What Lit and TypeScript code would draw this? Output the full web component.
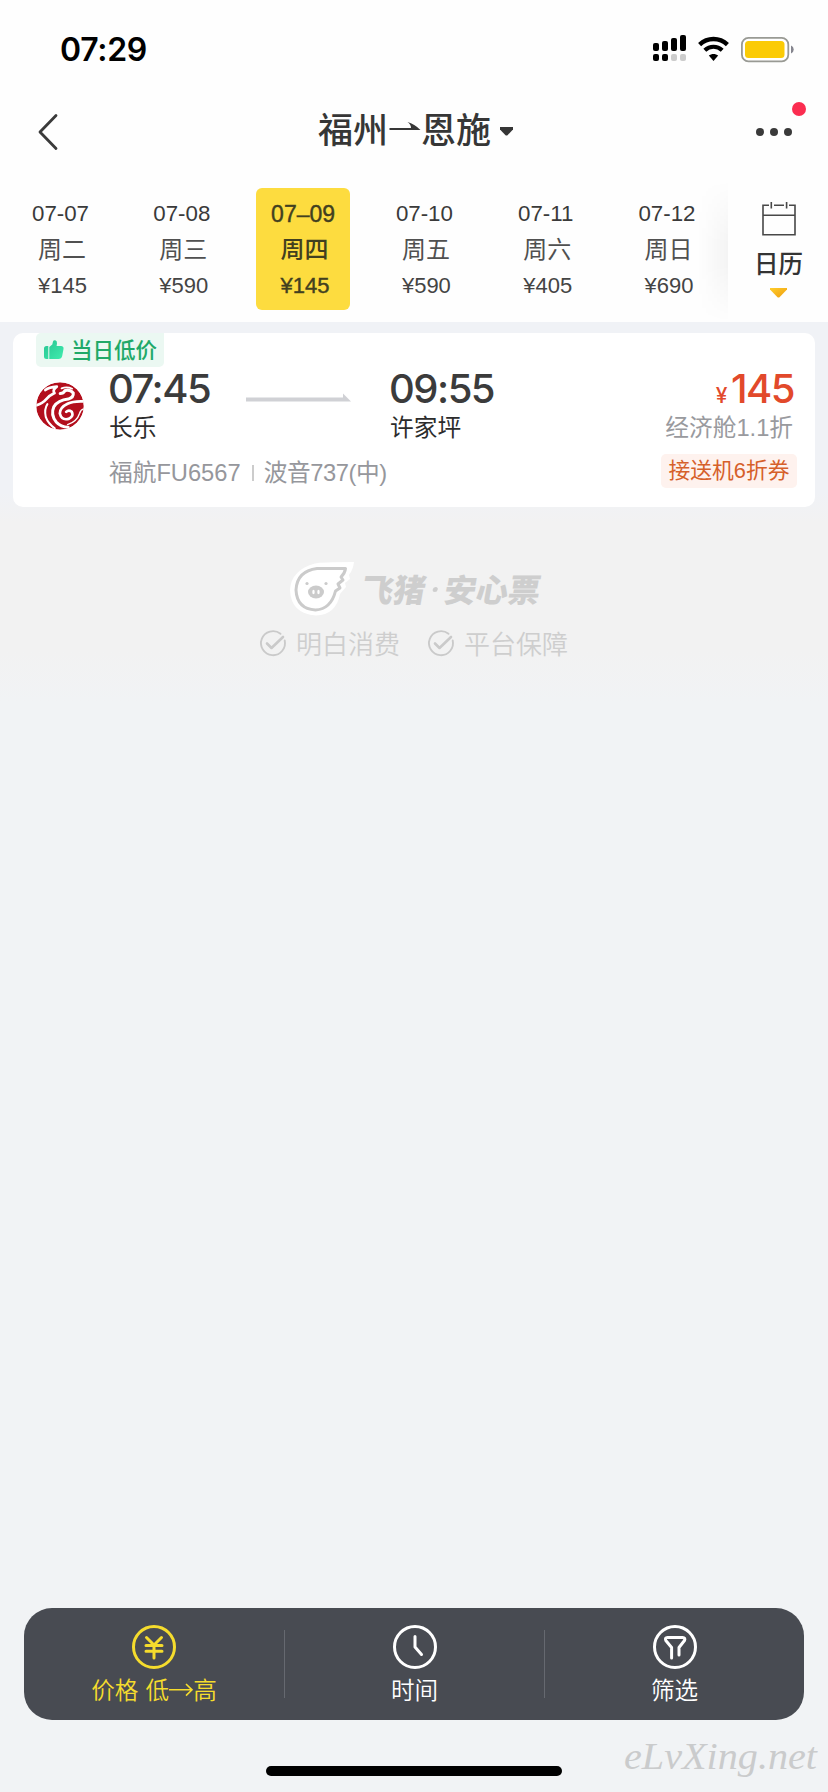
import { LitElement, html, css, svg } from "lit";
import { customElement } from "lit/decorators.js";
import { classMap } from "lit/directives/class-map.js";

const shared = css`
  :host { display: block; box-sizing: border-box; }
  * { box-sizing: border-box; }
  svg { display: block; overflow: visible; }
`;

@customElement("status-bar")
class StatusBar extends LitElement {
  static styles = [shared, css`
    :host { height: 90px; padding: 29px 34px 0 60px; display: flex; justify-content: space-between; }
    .clock { font: 600 32px/42px Inter, sans-serif; color: #000; letter-spacing: -0.3px; }
    .icons { display: flex; gap: 12px; padding-top: 6px; }
  `];
  render() {
    return html`
      <span class="clock">07:29</span>
      <div class="icons">
        <svg width="33" height="28" viewBox="0 0 33 28">
          <rect x="0" y="8" width="6" height="8" rx="2" />
          <rect x="9" y="6" width="6" height="10" rx="2" />
          <rect x="18" y="3" width="6" height="13" rx="2" />
          <rect x="27" y="0" width="6" height="16" rx="2" />
          <rect x="0" y="19" width="6" height="7" rx="2" />
          <rect x="9" y="19" width="6" height="7" rx="2" />
          <rect x="18" y="19" width="6" height="7" rx="2" fill="#ccc" />
          <rect x="27" y="19" width="6" height="7" rx="2" fill="#ccc" />
        </svg>
        <svg width="31" height="28" viewBox="0 0 31 28">
          <path d="M1.6 9.6C9.4 2.2 21.6 2.2 29.4 9.6" fill="none" stroke="#000" stroke-width="4.4" />
          <path d="M6.8 15.2C11.8 10.6 19.2 10.6 24.2 15.2" fill="none" stroke="#000" stroke-width="4.2" />
          <path d="M10.8 20.6C13.5 18.3 17.5 18.3 20.2 20.6L15.5 26Z" />
        </svg>
        <svg width="53" height="28" viewBox="0 0 53 28">
          <rect x="0.9" y="2.9" width="46.4" height="23.4" rx="6.5" fill="#fff" stroke="#999a94" stroke-width="1.8" />
          <rect x="4" y="6" width="39.5" height="17" rx="3.5" fill="#fbcb05" />
          <path d="M50 10.5Q52.7 11.6 52.7 14.6T50 18.6Z" fill="#85858e" />
        </svg>
      </div>`;
  }
}

@customElement("nav-header")
class NavHeader extends LitElement {
  static styles = [shared, css`
    :host { height: 90px; padding: 0 22px 0 38px; display: grid; grid-template-columns: 100px 1fr 100px; }
    .back { padding-top: 24px; }
    .title { display: flex; justify-content: center; align-items: flex-start; padding: 11.5px 13px 0 0; color: #363636;
      font: 500 35px/52px "Noto Sans CJK SC", sans-serif; }
    .arrow { margin: 20.5px 0 0 1px; }
    .caret { margin: 25.5px 0 0 9px; }
    .more { display: flex; flex-direction: column; align-items: flex-end; padding-top: 12px; }
    .dots { margin: 11px 14px 0 0; }
  `];
  render() {
    return html`
      <svg class="back" width="22" height="60" viewBox="0 0 22 36">
        <path d="M18 1.5L2 18L18 34.5" fill="none" stroke="#3a3a3a" stroke-width="2.8" stroke-linecap="round" stroke-linejoin="round" />
      </svg>
      <div class="title">
        <span>福州</span>
        <svg class="arrow" width="32" height="10" viewBox="0 0 32 10">
          <path d="M0.500 6H22Q22 2.500 18.500 0Q25.500 2 31.500 8H0.500Z" fill="#363636" />
        </svg>
        <span>恩施</span>
        <svg class="caret" width="13" height="9" viewBox="0 0 13 9">
          <path d="M0 0H13V2.5L7.5 8.2Q6.5 9 5.5 8.2L0 2.5Z" fill="#363636" />
        </svg>
      </div>
      <div class="more">
        <svg width="14" height="14" viewBox="0 0 14 14"><circle cx="7" cy="7" r="7" fill="#fb2d50" /></svg>
        <svg class="dots" width="36" height="10" viewBox="0 0 36 10">
          <circle cx="4" cy="5" r="4" fill="#3a3a3a" /><circle cx="18" cy="5" r="4" fill="#3a3a3a" /><circle cx="32" cy="5" r="4" fill="#3a3a3a" />
        </svg>
      </div>`;
  }
}

@customElement("date-strip")
class DateStrip extends LitElement {
  static styles = [shared, css`
    :host { height: 142px; display: flex; font-family: "Liberation Sans", "Noto Sans CJK SC", sans-serif; color: #444; }
    .days { flex: 1; display: grid; grid-template-columns: repeat(6, 121.3px); padding-top: 8px; position: relative; overflow: hidden; }
    .day { width: 94px; height: 122px; margin-left: 13.5px; border-radius: 6px; padding-top: 8px;
      display: flex; flex-direction: column; align-items: center; line-height: 36px; }
    .date { font-size: 22.3px; color: #3a3a3a; }
    .week { font-size: 24px; padding-left: 3px; color: #505050; }
    .fare { font-size: 22px; padding-left: 4px; }
    .active { background: #fddc3f; }
    .active .date, .active .week, .active .fare { color: #42401f; font-weight: 500; }
    .active .date, .active .fare { -webkit-text-stroke: 0.4px #42401f; }
    .active .date { font-size: 23px; }
    .shade { position: absolute; right: 0; top: 0; bottom: 0; width: 30px;
      background: linear-gradient(90deg, rgba(0,0,0,0), rgba(0,0,0,0.04));
      -webkit-mask-image: linear-gradient(180deg, transparent, #000 45%, #000 60%, transparent); }
    .calendar { width: 100px; padding: 22px 0 0 1px; display: flex; flex-direction: column; align-items: center; }
    .calendar b { font: 500 24.5px/36px "Noto Sans CJK SC", sans-serif; color: #333; margin-top: 8.5px; }
    .tri { margin-top: 7px; }
  `];
  private days = [
    ["07-07", "周二", "¥145"], ["07-08", "周三", "¥590"], ["07–09", "周四", "¥145"],
    ["07-10", "周五", "¥590"], ["07-11", "周六", "¥405"], ["07-12", "周日", "¥690"],
  ];
  render() {
    return html`
      <div class="days">
        ${this.days.map(([d, w, p], i) => html`
          <div class=${classMap({ day: true, active: i === 2 })}>
            <span class="date">${d}</span><span class="week">${w}</span><span class="fare">${p}</span>
          </div>`)}
        <div class="shade"></div>
      </div>
      <div class="calendar">
        <svg width="34" height="34" viewBox="0 0 34 34" fill="none" stroke="#484848" stroke-width="1.6">
          <path d="M7 3.2H1V32.8H33V3.2H27M12 3.2H22M1 13.3H33M9.3 0V6.6M24.6 0V6.6" />
        </svg>
        <b>日历</b>
        <svg class="tri" width="17" height="10" viewBox="0 0 17 10">
          <defs><linearGradient id="g" x1="0" y1="0" x2="1" y2="1"><stop offset="0" stop-color="#ffcd2b" /><stop offset="1" stop-color="#ee9d10" /></linearGradient></defs>
          <path d="M0 0H17V1.5L9.5 9.2Q8.5 10 7.5 9.2L0 1.5Z" fill="url(#g)" />
        </svg>
      </div>`;
  }
}

@customElement("flight-card")
class FlightCard extends LitElement {
  static styles = [shared, css`
    :host { margin: 11px 13px 0; height: 174px; background: #fff; border-radius: 10px; padding: 0 18px 0 23px;
      font-family: "Liberation Sans", "Noto Sans CJK SC", sans-serif; }
    .badge { display: flex; align-items: center; width: 128px; height: 34px; padding-left: 8px; gap: 7px;
      background: #ebf8f2; border-radius: 5px 0 5px 5px; color: #20a968;
      font: 500 21.5px/34px "Noto Sans CJK SC", sans-serif; white-space: nowrap; }
    .badge span { margin-top: -2px; }
    .main { display: grid; grid-template-columns: 73px 137px 144px 1fr auto; height: 76px; }
    .logo { padding-top: 15px; }
    .time, .price { height: 44px; font: 500 40px/44px Inter, sans-serif; white-space: nowrap; }
    .time { color: #3b3b3b; letter-spacing: -1.5px; margin-left: -1px; }
    .place, .cabin { font-size: 23.7px; line-height: 34px; }
    .place { color: #2c2c2c; }
    .line { padding-top: 26px; }
    .price { text-align: right; color: #e2492b; letter-spacing: -1.5px; margin-right: 3px; }
    .yen { font-size: 21px; line-height: 1; letter-spacing: 3.5px; }
    .cabin { text-align: right; color: #999a9e; padding-right: 4px; }
    .foot { display: flex; justify-content: space-between; padding-left: 73px; margin-top: 11px; }
    .info { display: flex; align-items: center; font-size: 23.7px; line-height: 36px; color: #96979c; padding-top: 1px; }
    .plane { letter-spacing: -0.4px; }
    .bar { width: 2px; height: 16px; background: #ccc; margin: 0 10px 0 11px; }
    .coupon { width: 136px; height: 34px; background: #fef2ee; border-radius: 5px; text-align: center;
      font-size: 21.8px; line-height: 34px; color: #d6602a; white-space: nowrap; }
  `];
  render() {
    return html`
      <div class="badge">
        <svg width="20" height="20" viewBox="0 0 20 20">
          <defs><linearGradient id="t" x1="0" y1="0" x2="1" y2="1"><stop offset="0" stop-color="#27c391" /><stop offset="1" stop-color="#3fedae" /></linearGradient></defs>
          <path d="M2.5 6H4.300V19H2.5Q0 19 0 16.5V8.500Q0 6 2.500 6ZM5.300 7L8.300 4.500L9 1.500Q9.500 0 11.200 0.300Q13.300 0.800 13 3.500L12.600 6H17Q20 6.300 19.500 9L18.200 16Q17.500 19 14.500 19H5.300Z" fill="url(#t)" />
        </svg>
        <span>当日低价</span>
      </div>
      <div class="main">
        <svg class="logo" width="48" height="63" viewBox="20 22 143 143" preserveAspectRatio="xMidYMax meet">
          <defs><clipPath id="c"><circle cx="91.500" cy="93.500" r="71" /></clipPath></defs>
          <g clip-path="url(#c)">
            <circle cx="91.500" cy="93.500" r="71" fill="#b30f1d" />
            <g fill="none" stroke="#fff" stroke-linecap="round" stroke-linejoin="round">
              <path d="M48 46Q58 38 82 36Q68 46 75 55Q60 62 50 74Q40 86 20 92" stroke-width="8" />
              <path d="M92 56Q102 56 106 48Q120 42 131 55Q133 68 116 73Q86 76 73 96Q63 119 80 141Q94 156 116 157" stroke-width="9" />
              <path d="M96 41Q112 35 128 42" stroke-width="5" />
              <path d="M54 88Q44 103 49 126Q56 146 76 160" stroke-width="6" />
              <path d="M164 80Q132 78 114 87Q91 98 91 116Q96 137 117 132Q134 124 126 110Q117 104 110 111" stroke-width="8" />
              <path d="M164 102Q153 104 150 115Q142 140 114 149" stroke-width="4" />
            </g>
          </g>
        </svg>
        <div><div class="time">07:45</div><div class="place">长乐</div></div>
        <svg class="line" width="105" height="35" viewBox="0 0 105 9">
          <path d="M0 4.500H97V0.500L105 8.500H0Z" fill="#d0d1d5" />
        </svg>
        <div><div class="time">09:55</div><div class="place">许家坪</div></div>
        <div><div class="price"><span class="yen">¥</span>145</div><div class="cabin">经济舱1.1折</div></div>
      </div>
      <div class="foot">
        <div class="info">福航FU6567<i class="bar"></i><span class="plane">波音737(中)</span></div>
        <div class="coupon">接送机6折券</div>
      </div>`;
  }
}

@customElement("brand-note")
class BrandNote extends LitElement {
  static styles = [shared, css`
    :host { padding-top: 55px; color: #cecece; font-family: "Noto Sans CJK SC", sans-serif; }
    .brand { display: flex; height: 54px; padding-left: 290px; gap: 8px; }
    .name { display: flex; align-items: center; font-size: 32px; font-weight: 900; line-height: 50px; height: 52px; transform: skewX(-10deg); white-space: nowrap; }
    .dot { width: 5px; height: 5px; border-radius: 50%; background: #cecece; margin: 2px 7px 0 7px; }
    .tips { display: flex; justify-content: center; gap: 28px; margin-top: 8px; }
    .tip { display: flex; align-items: center; gap: 10px; font-size: 26px; line-height: 38px; font-weight: 350; }
  `];
  private tip(label: string) {
    return html`<div class="tip">
      <svg width="26" height="26" viewBox="0 0 26 26" fill="none" stroke="#cacaca" stroke-linecap="round" stroke-linejoin="round">
        <path d="M20.500 3.800A12 12 0 1 0 24.700 10.500" stroke-width="1.900" />
        <path d="M7 13.500L11.500 18L23 7" stroke-width="2.600" />
      </svg><span>${label}</span></div>`;
  }
  render() {
    return html`
      <div class="brand">
        <svg width="64" height="54" viewBox="0 0 64 54">
          <path d="M25 1.500Q30 0 64 0Q63 8 59 13L60 17L55 21L56 25L50 32Q46 53 26 53.500Q1 52 0 28Q1 8 25 1.500Z" fill="#fff" />
          <path d="M27 6.500H55.500Q55 11 51 15L53 18L48 22L50 26L45.500 29Q41 47 25.500 48Q7 47 6 28Q7 9 27 6.500Z" fill="#fff" stroke="#cbcbcb" stroke-width="3" stroke-linejoin="round" />
          <ellipse cx="26" cy="30" rx="8" ry="6.500" fill="#cbcbcb" />
          <ellipse cx="23.500" cy="30" rx="1.200" ry="2.200" fill="#fff" /><ellipse cx="28.500" cy="30" rx="1.200" ry="2.200" fill="#fff" />
          <circle cx="17" cy="21.500" r="1.600" fill="#cbcbcb" /><circle cx="36" cy="21.500" r="1.600" fill="#cbcbcb" />
        </svg>
        <div class="name"><span>飞猪</span><i class="dot"></i><span>安心票</span></div>
      </div>
      <div class="tips">${this.tip("明白消费")}${this.tip("平台保障")}</div>`;
  }
}

@customElement("sort-bar")
class SortBar extends LitElement {
  static styles = [shared, css`
    :host { height: 112px; margin: 0 24px; background: #484b52; border-radius: 28px; display: grid; grid-template-columns: repeat(3, 1fr); }
    .item { display: flex; flex-direction: column; align-items: center; padding-top: 17px; color: #fff;
      font: 350 24px/36px "Noto Sans CJK SC", sans-serif; }
    .item + .item { border-left: 1px solid; border-image: linear-gradient(180deg, transparent 20%, #666970 20%, #666970 80%, transparent 80%) 1; }
    .on { color: #f5dc2d; }
    .label { margin-top: 2px; white-space: pre; font-size: 23.6px; word-spacing: 2px; }
    .label svg { display: inline-block; }
  `];
  private items = [
    { on: true, label: html`价格 低<svg width="24" height="14" viewBox="0 0 24 14" fill="none" stroke="currentColor" stroke-width="1.6"><path d="M0 4.800H23M17 -1L23 4.800L17 10.600" /></svg>高`,
      icon: svg`<path d="M14.500 12.500L22 20L29.500 12.500M22 20V33M14 20.500H30M14 26.300H30" />` },
    { on: false, label: "时间", icon: svg`<path d="M22 11.500V22L28.500 29.500" />` },
    { on: false, label: "筛选", icon: svg`<path d="M18.600 33V22.500L12.800 15.500Q11.600 12.500 14.500 12.500H29.500Q32.800 12.700 31.500 15.500L26 22.500V30" />` },
  ];
  render() {
    return this.items.map(i => html`
      <div class=${classMap({ item: true, on: i.on })}>
        <svg width="44" height="44" viewBox="0 0 44 44" fill="none" stroke="currentColor" stroke-width="3" stroke-linecap="round" stroke-linejoin="round">
          <circle cx="22" cy="22" r="20.500" />${i.icon}
        </svg>
        <span class="label">${i.label}</span>
      </div>`);
  }
}

@customElement("app-root")
class AppRoot extends LitElement {
  static styles = [shared, css`
    :host { display: flex; flex-direction: column; width: 828px; height: 1792px; background: #f1f3f5; position: relative; overflow: hidden; }
    .top { background: #fefefe; }
    .list { flex: 1; background: linear-gradient(180deg, #f0f2f6 0, #f0f2f6 170px, #f2f2f2 200px, #f2f2f2 330px, #f1f3f5 380px); }
    .home { width: 296px; height: 10px; border-radius: 5px; background: #000; margin: 46px auto 16px; }
    .mark { position: absolute; right: 8px; bottom: 11px; width: 198px; }
    .mark text { font: italic 500 38px "Liberation Serif", serif; fill: #cacbcc; }
  `];
  render() {
    return html`
      <div class="top">
        <status-bar></status-bar>
        <nav-header></nav-header>
        <date-strip></date-strip>
      </div>
      <div class="list">
        <flight-card></flight-card>
        <brand-note></brand-note>
      </div>
      <sort-bar></sort-bar>
      <div class="home"></div>
      <svg class="mark" height="42" viewBox="0 0 198 42"><text x="2" y="30" textLength="193" lengthAdjust="spacingAndGlyphs">eLvXing.net</text></svg>`;
  }
}
